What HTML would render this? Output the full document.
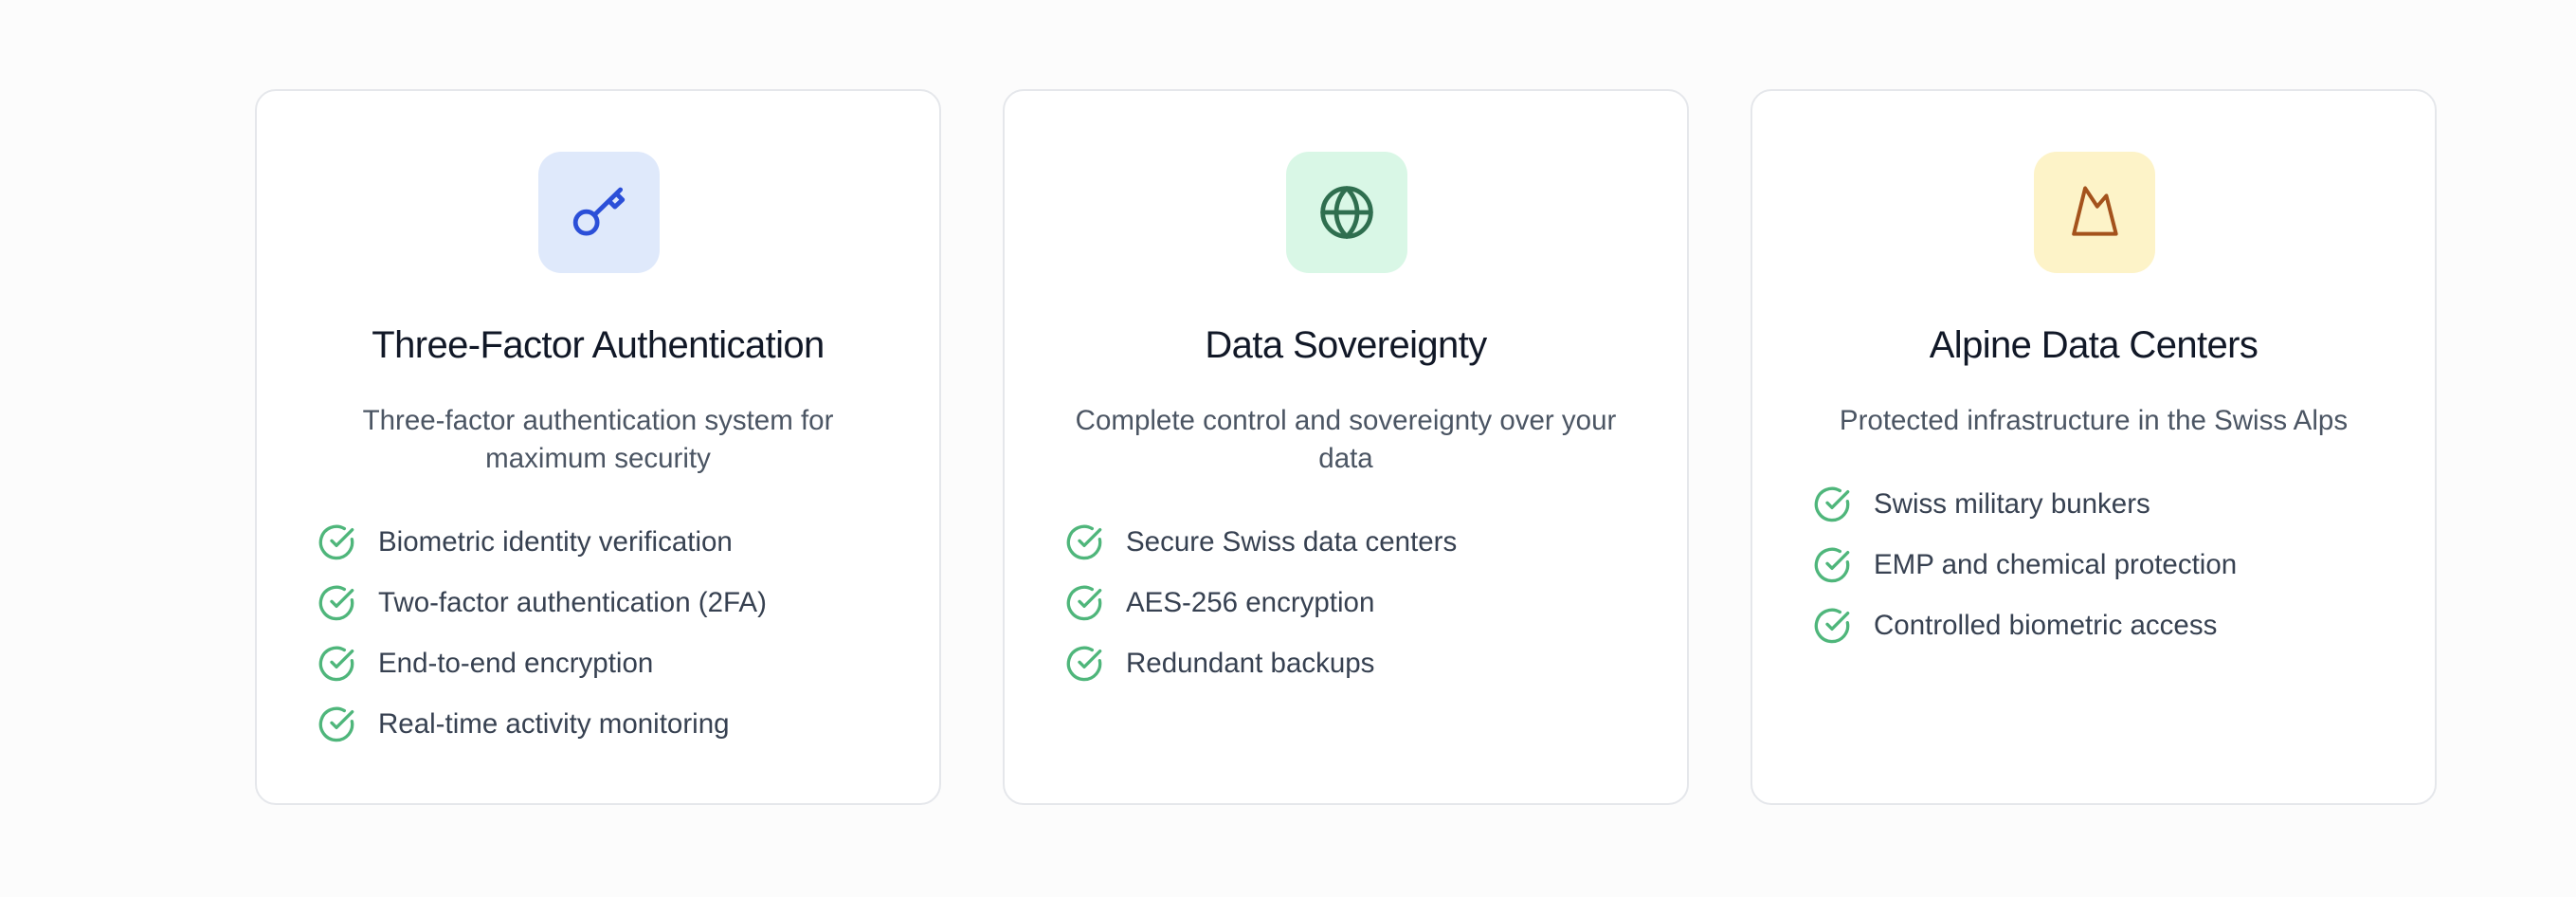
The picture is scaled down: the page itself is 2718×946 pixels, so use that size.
<!DOCTYPE html>
<html><head><meta charset="utf-8"><style>
*{box-sizing:border-box;margin:0;padding:0}
body{width:2718px;height:946px;background:#fcfcfc;font-family:"Liberation Sans",sans-serif;position:relative;overflow:hidden}
.card{position:absolute;top:94px;width:724px;height:755px;background:#fff;border:2px solid #e5e7eb;border-radius:22px;text-align:center}
.ib{position:absolute;left:297px;top:64px;width:128px;height:128px;border-radius:24px;display:flex;align-items:center;justify-content:center}
h3{position:absolute;top:243px;left:0;right:0;font-size:40px;font-weight:500;color:#111827;letter-spacing:-0.6px;line-height:50px}
p{position:absolute;top:328px;left:50px;right:50px;font-size:29.5px;line-height:40px;color:#4b5563}
ul{position:absolute;left:64px;list-style:none;text-align:left}
li{height:64px;display:flex;align-items:center;font-size:29.5px;color:#374151}
li svg{width:40px;height:40px;margin-right:24px;flex:none}
</style></head><body>
<svg width="0" height="0" style="position:absolute"><defs><symbol id="ck" viewBox="0 0 24 24"><path d="M21.8 10A10 10 0 1 1 17 3.3" fill="none" stroke="#4fb67b" stroke-width="2" stroke-linecap="round"/><path d="m9 11 3 3L22 4" fill="none" stroke="#4fb67b" stroke-width="2" stroke-linecap="round" stroke-linejoin="round"/></symbol></defs></svg>

<div class="card" style="left:269px">
<div class="ib" style="background:#dfe9fb"><svg width="64" height="64" viewBox="0 0 24 24" fill="none" stroke="#2b4fd8" stroke-width="1.8" stroke-linecap="round" stroke-linejoin="round"><circle cx="7" cy="16" r="4.3"/><path d="M10.2 13 L20.5 3"/><path d="M16 7.5l2.3 2.3L21.3 7l-2.3-2.3"/></svg></div>
<h3>Three-Factor Authentication</h3>
<p>Three-factor authentication system for maximum security</p>
<ul style="top:444px">
<li><svg><use href="#ck"/></svg>Biometric identity verification</li>
<li><svg><use href="#ck"/></svg>Two-factor authentication (2FA)</li>
<li><svg><use href="#ck"/></svg>End-to-end encryption</li>
<li><svg><use href="#ck"/></svg>Real-time activity monitoring</li>
</ul></div>

<div class="card" style="left:1058px">
<div class="ib" style="background:#d9f7e6"><svg width="64" height="64" viewBox="0 0 24 24" fill="none" stroke="#2f6e4f" stroke-width="1.8" stroke-linecap="round" stroke-linejoin="round"><circle cx="12" cy="12" r="9.5"/><path d="M12 2.5a13 13 0 0 0 0 19a13 13 0 0 0 0-19"/><path d="M2.5 12h19"/></svg></div>
<h3>Data Sovereignty</h3>
<p>Complete control and sovereignty over your data</p>
<ul style="top:444px">
<li><svg><use href="#ck"/></svg>Secure Swiss data centers</li>
<li><svg><use href="#ck"/></svg>AES-256 encryption</li>
<li><svg><use href="#ck"/></svg>Redundant backups</li>
</ul></div>

<div class="card" style="left:1847px">
<div class="ib" style="background:#fdf3c8"><svg width="68" height="68" viewBox="0 0 24 24" fill="none" stroke="#a4521c" stroke-width="1.4" stroke-linecap="round" stroke-linejoin="round"><path d="M8.5 3 L4.3 20 H20 L16.4 5.8 L13 9.8 Z"/></svg></div>
<h3>Alpine Data Centers</h3>
<p>Protected infrastructure in the Swiss Alps</p>
<ul style="top:404px">
<li><svg><use href="#ck"/></svg>Swiss military bunkers</li>
<li><svg><use href="#ck"/></svg>EMP and chemical protection</li>
<li><svg><use href="#ck"/></svg>Controlled biometric access</li>
</ul></div>
</body></html>
